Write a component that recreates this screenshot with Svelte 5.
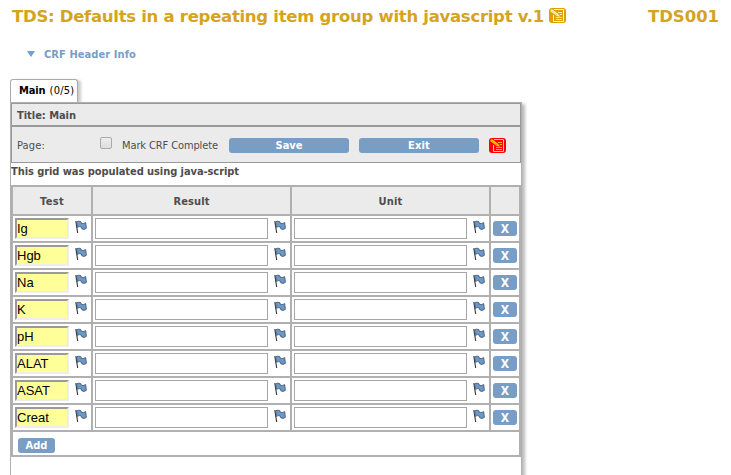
<script>
  const tests = ['Ig', 'Hgb', 'Na', 'K', 'pH', 'ALAT', 'ASAT', 'Creat'];

  // Spaces the letters of a label so that it spans the given width.
  function fit(node, width) {
    const range = document.createRange();
    range.selectNodeContents(node);
    const natural = range.getBoundingClientRect().width;
    node.style.letterSpacing = `${(width - natural) / node.textContent.length}px`;
  }
</script>

{#snippet flag()}
  <svg class="flag" width="12" height="14" viewBox="0 0 12 14">
    <path d="M.8 1.2 2.7 13" stroke="#333" stroke-width="1.1" fill="none" />
    <path d="M1.5 1.8 Q4 .5 6 1.8 L6.4 3.4 Q8.5 4 10.7 2.6 L11.4 8.3 Q9 10.4 6.8 8.8 L6.3 7 Q4.2 6 2.3 7.4Z" fill="#6b98c6" stroke="#3c5068" stroke-width=".8" />
  </svg>
{/snippet}

{#snippet note(bg, ink)}
  <svg class="note" width="17" height="15" viewBox="0 0 17 15">
    <rect width="17" height="15" rx="3" fill={bg} />
    <path d="M5 1.5H14.5V13.5H4.5V7" stroke={ink} fill="none" />
    <path d="M9 4.5H13M11 6.5H13M7 9.5H13M7 11.5H13" stroke={ink} stroke-width=".8" fill="none" />
    <path d="M.8 3 2.8 .8 9.8 6.2 11.3 9 8 8.3Z" fill={ink} stroke={bg} stroke-width=".5" />
    <path d="M2.500 2.500 8.5 7.300" stroke={bg} stroke-width=".4" />
  </svg>
{/snippet}

<main>
  <header>
    <h1><span use:fit={532}>TDS: Defaults in a repeating item group with javascript v.1</span></h1>
    {@render note('#e2a000', '#fff8e0')}
    <h1 class="subject"><span use:fit={71}>TDS001</span></h1>
  </header>
  <div class="info"><i></i><b use:fit={92}>CRF Header Info</b></div>
  <div class="tab"><b use:fit={26.5}>Main</b><span use:fit={25}>(0/5)</span></div>
  <section>
    <div class="title"><b use:fit={59}>Title: Main</b></div>
    <div class="bar">
      <span class="page"><span use:fit={28}>Page:</span></span>
      <input type="checkbox" aria-label="Mark CRF Complete" />
      <span class="mark"><span use:fit={96}>Mark CRF Complete</span></span>
      <button class="wide"><span use:fit={27}>Save</span></button>
      <button class="wide"><span use:fit={22}>Exit</span></button>
      {@render note('#ff0000', '#ffe000')}
    </div>
    <div class="message"><b use:fit={228}>This grid was populated using java-script</b></div>
    <div class="grid">
      <div class="row head">
        <div><b use:fit={24}>Test</b></div>
        <div><b use:fit={36}>Result</b></div>
        <div><b use:fit={24}>Unit</b></div>
        <div></div>
      </div>
      {#each tests as test}
        <div class="row">
          <div><input class="test" value={test} aria-label="Test" />{@render flag()}</div>
          <div><input aria-label="Result" />{@render flag()}</div>
          <div><input aria-label="Unit" />{@render flag()}</div>
          <div><button>X</button></div>
        </div>
      {/each}
      <div class="add"><button><span use:fit={22}>Add</span></button></div>
    </div>
  </section>
</main>

<style>
  :global(body) { background: #fff; overflow: hidden; }
  main { height: 475px; overflow: hidden; font: 11px/14px 'DejaVu Sans Condensed', 'DejaVu Sans', sans-serif; color: #4d4d4d; white-space: nowrap; }
  span, b { display: inline-block; }
  header { display: flex; height: 47px; padding: 8px 0 0 12px; box-sizing: border-box; }
  h1 { margin: 0; width: 537px; font: bold 16.5px/18px 'DejaVu Sans', sans-serif; color: #d4a41e; }
  .subject { margin-left: 82px; width: 80px; }
  .info { display: flex; align-items: center; height: 14px; padding-left: 27px; color: #789ec5; }
  .info b { padding-top: 1px; }
  .info i { border: 4px solid transparent; border-top: 6px solid #729fcf; border-bottom: 0; margin-right: 9px; }
  .tab { display: flex; gap: 4px; box-sizing: border-box; width: 68px; height: 23px; margin: 18px 0 0 10px; padding: 4px 0 0 8px; border: 1px solid #aaa; border-bottom: 0; border-radius: 3px 3px 0 0; color: #000; box-shadow: 3px 1px 3px #ccc; }
  section { position: relative; box-sizing: border-box; width: 512px; height: 390px; margin-left: 10px; border: 1px solid #b0b0b0; background: #fff; box-shadow: 3px 2px 3px #bbb; }
  .title { box-sizing: border-box; height: 23px; padding: 5px 5px; border: 1px solid #999; background: #ebebeb; }
  .bar { display: flex; align-items: center; box-sizing: border-box; height: 37px; padding: 1px 0 0 5px; border: 1px solid #999; background: #ebebeb; }
  .page { width: 83px; padding-top: 2px; }
  .bar input { appearance: none; box-sizing: border-box; width: 12px; height: 12px; margin: 0 10px 5px 0; border: 1px solid #aaa; border-radius: 2px; background: linear-gradient(#eee, #ddd); }
  .mark { width: 107px; padding-top: 2px; }
  button { display: flex; align-items: center; justify-content: center; height: 15px; padding: 0; border: 0; border-radius: 3px; background: #789ec5; color: #fff; font: bold 11px/14px 'DejaVu Sans Condensed', 'DejaVu Sans', sans-serif; }
  .wide { width: 120px; margin-right: 10px; }
  .wide span { padding-top: 1px; }
  .message { height: 22px; padding-top: 2px; box-sizing: border-box; }
  .grid { box-sizing: border-box; width: 510px; border: 2px solid #b0b0b0; }
  .row { display: grid; grid-template-columns: 78px 197px 197px 28px; column-gap: 2px; height: 25px; border-bottom: 2px solid #b0b0b0; background: #b0b0b0; }
  .row > div { display: flex; align-items: center; justify-content: space-between; padding: 0 4px 0 2px; background: #fff; }
  .row > div:last-child { padding: 0; justify-content: center; }
  .row.head { height: 27px; }
  .row.head > div { justify-content: center; padding: 2px 0 0; background: #ebebeb; }
  .row input { box-sizing: border-box; width: 173px; height: 21px; padding: 0; border: 1px solid #a6a6a6; background: #fff; font: 13px 'Liberation Sans', Arial, sans-serif; color: #000; }
  .row .test { width: 54px; border: 2px solid; border-color: #9a9a9a #eee #eee #9a9a9a; background: #ff9; }
  .flag { margin: 0 0 3px; }
  .row button { width: 24px; font-size: 12px; }
  .add { height: 23px; padding: 6px 5px 0; box-sizing: border-box; }
  .add button { width: 37px; }
</style>
